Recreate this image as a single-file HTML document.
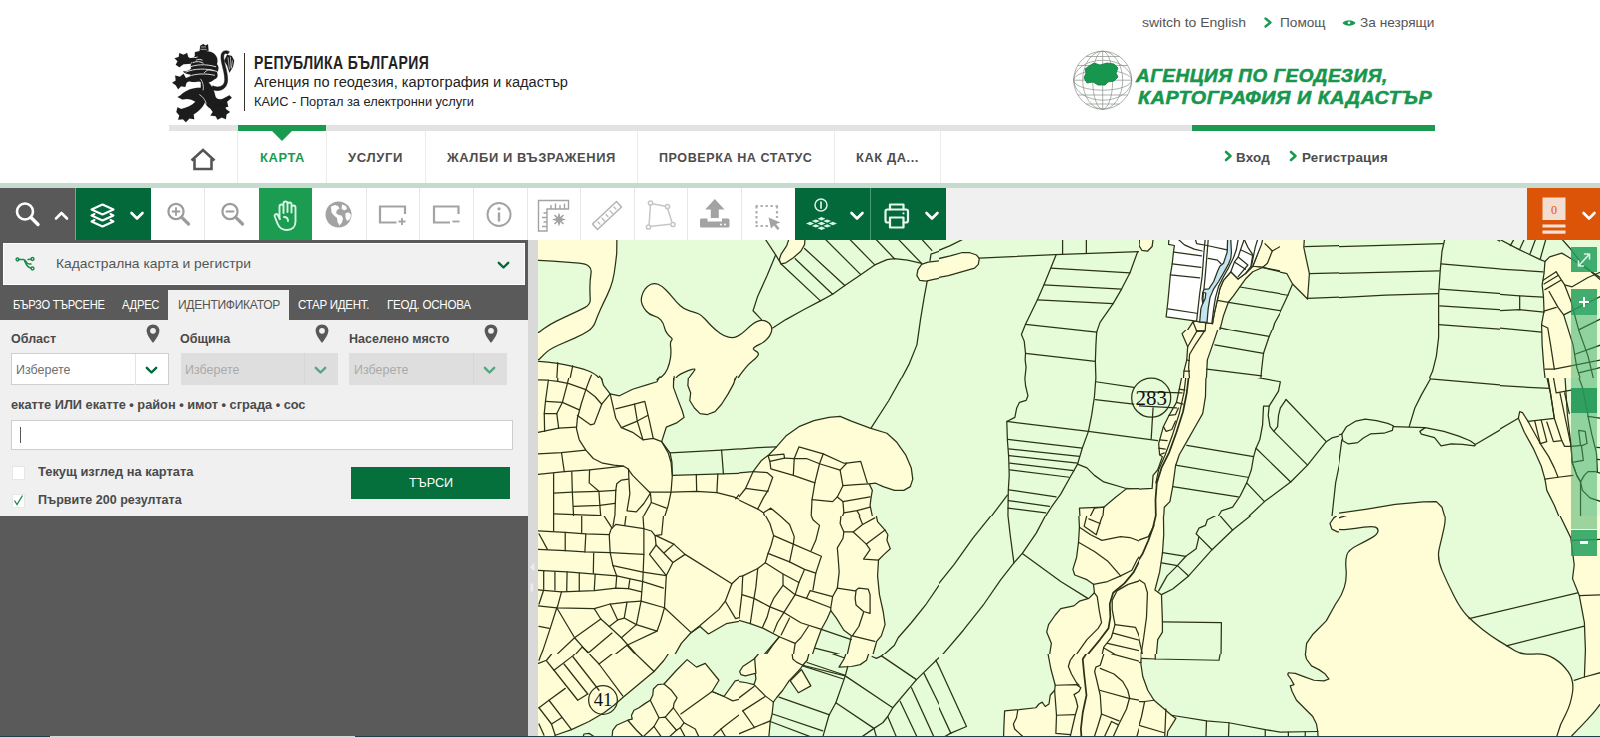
<!DOCTYPE html>
<html lang="bg">
<head>
<meta charset="utf-8">
<title>КАИС - Портал за електронни услуги</title>
<style>
*{box-sizing:border-box;margin:0;padding:0}
html,body{width:1600px;height:737px;overflow:hidden;background:#fff}
body{font-family:"Liberation Sans",sans-serif;color:#4a4a4a;position:relative}
.abs{position:absolute}
.t{position:absolute;white-space:nowrap;line-height:1;transform-origin:0 50%}
/* header */
#toplinks .t{font-size:13px;color:#555;top:16px}
#graybar{left:169px;top:125px;width:1266px;height:6px;background:#e3e3e3}
.gb{background:#1a9a50;height:6px;top:125px}
#nav{left:169px;top:131px;width:1266px;height:52px;background:#fff}
.nb{top:131px;width:1px;height:52px;background:#ececec}
.ni{font-weight:bold;font-size:13px;letter-spacing:.6px;color:#4d4d4d;top:151px}
#navstrip{left:0;top:183px;width:1600px;height:5px;background:#c6dacd}
/* toolbar */
#toolbar{left:0;top:188px;width:1600px;height:52px;background:#f0f0f0}
.tb{top:188px;height:52px}
.sep{top:188px;width:1px;height:52px;background:#e6e6e6}
/* panel */
#panel{left:0;top:240px;width:528px;height:497px;background:#5a5a5a}
#split{left:528px;top:240px;width:10px;height:497px;background:#d9d9d9}
#ddl{left:3px;top:243px;width:521.5px;height:42px;background:#f1f1f1;border:1px solid #fff}
.tab{font-size:12px;color:#fff;top:299px;letter-spacing:-.3px}
#tabact{left:168px;top:290px;width:121px;height:30px;background:#f0f0f0}
#form{left:0;top:320px;width:528px;height:196px;background:#f0f0f0}
.lbl{font-weight:bold;font-size:12.5px;color:#4a4a4a}
.sel{height:32px;top:353px;font-size:13px}
#map{left:538px;top:240px;width:1062px;height:497px;background:#e6fcd9;overflow:hidden}
</style>
</head>
<body>
<!-- top links -->
<div id="toplinks">
<span class="t" id="k1" style="left:1142.0px;transform:scaleX(1.0741)">switch to English</span>
<span class="t" id="k2" style="left:1280.4px;transform:scaleX(1.0498)">Помощ</span>
<span class="t" id="k3" style="left:1360.0px;transform:scaleX(1.0500)">За незрящи</span>
</div>

<!-- header left -->
<div class="abs" style="left:244px;top:53px;width:1px;height:58px;background:#333"></div>
<span class="t" id="h1" style="left:254.3px;top:55px;font-size:17.5px;font-weight:bold;color:#222;letter-spacing:.5px;transform:scaleX(0.8011)">РЕПУБЛИКА БЪЛГАРИЯ</span>
<span class="t" id="h2" style="left:254.0px;top:74px;font-size:15.5px;color:#222;transform:scaleX(0.9435)">Агенция по геодезия, картография и кадастър</span>
<span class="t" id="h3" style="left:254.0px;top:94.5px;font-size:13px;color:#222;transform:scaleX(0.9860)">КАИС - Портал за електронни услуги</span>

<!-- header right -->
<span class="t" id="a1" style="left:1136.0px;top:66.800px;-webkit-text-stroke:.55px #17964d;font-size:18px;font-weight:bold;font-style:italic;color:#17964d;letter-spacing:.5px;transform:scaleX(1.0517)">АГЕНЦИЯ ПО ГЕОДЕЗИЯ,</span>
<span class="t" id="a2" style="left:1137.5px;top:88.700px;-webkit-text-stroke:.55px #17964d;font-size:18px;font-weight:bold;font-style:italic;color:#17964d;letter-spacing:.5px;transform:scaleX(1.0956)">КАРТОГРАФИЯ И КАДАСТЪР</span>


<!-- top icons -->
<svg class="abs" style="left:1263px;top:17px" width="10" height="11" viewBox="0 0 10 11" fill="none" stroke="#1a9a50" stroke-width="2.300" stroke-linecap="round" stroke-linejoin="round"><path d="M2.500 1.500L7.500 5.500L2.500 9.500"/></svg>
<svg class="abs" style="left:1342px;top:19px" width="14" height="8" viewBox="0 0 14 8"><path d="M.5 4C3 .3 11 .3 13.500 4C11 7.700 3 7.700 .5 4Z" fill="#1a9a50"/><circle cx="7" cy="3.800" r="1.300" fill="#fff"/></svg>
<svg class="abs" style="z-index:3;left:1224px;top:150px" width="9" height="12" viewBox="0 0 9 12" fill="none" stroke="#1a9a50" stroke-width="2.600" stroke-linecap="round" stroke-linejoin="round"><path d="M2 2L6.500 6L2 10"/></svg>
<svg class="abs" style="z-index:3;left:1289px;top:150px" width="9" height="12" viewBox="0 0 9 12" fill="none" stroke="#1a9a50" stroke-width="2.600" stroke-linecap="round" stroke-linejoin="round"><path d="M2 2L6.500 6L2 10"/></svg>
<!-- home -->
<svg class="abs" style="z-index:3;left:189px;top:147px" width="28" height="25" viewBox="0 0 28 25" fill="none" stroke="#555" stroke-width="2.600" stroke-linejoin="miter"><path d="M5.500 12V22H22.500V12M2.500 13.500L14 3L25.500 13.500"/></svg>
<!-- lion -->
<svg class="abs" style="left:165px;top:38px" width="90" height="88" viewBox="0 0 754 737"><g fill="#1c1c1c" stroke="#1c1c1c" stroke-linejoin="round">
<path d="M290 110l5-45 25-15 20 12 20-10 5 55z"/>
<path d="M250 120c40-20 120-20 160 10c30 25 35 60 25 90c20 20 15 50 0 70c15 25 0 50-20 55c-30 30-80 40-130 20c-40 10-90 0-130-20c30-5 50-20 60-40c-25 0-50-10-65-25c30 0 55-10 70-25c-10-15-5-40 10-55c-15-5-30-20-30-35c20 5 40 0 50-15z"/>
<path d="M215 215l-60 5-35 25-30-20 15-30-25-25 35-10 5-35 35 15 30-15 10 35 35 30z"/>
<path d="M230 345l-50 30-10 35-35-5-25 25-20-35-30-20 30-20-5-40 40 10 30-25 20 35 60-10z"/>
<path d="M300 330c60 20 110 80 120 150c5 30 30 40 60 30l60-30 20 20-40 35 10 40-50 10c-40 30-100 20-130-20c-20-30-30-70-50-100z"/>
<path d="M320 420c-60-10-140 10-190 60l-25 15 40 20c40-10 80-5 110 20c-30 30-70 50-120 60l-30-15-10 40 25 30-10 35 40-5 25 25 30-30 40 5-5-40c50-30 90-70 100-120c30-20 20-80-20-100z"/>
<path d="M430 560l-50 30 20 30-20 30 45 5 15 30 35-20 35 15 5-40 30-20-35-25-5-35z"/>
<path d="M400 400c40 20 100 10 100-50c0-80-40-150-30-210c5-30 40-45 70-25l-15 20c-15-10-30-5-32 10c-8 50 32 120 32 205c0 90-90 110-140 75z" stroke-width="4"/>
<path d="M520 140l40 10 20 40-10 50-30 50-20-60-25-40z"/>
</g><g fill="none" stroke="#fff" stroke-width="7" stroke-linecap="round">
<path d="M225 155c15 10 30 12 45 5M262 185c15-8 35-8 50 0M235 205c30-12 60-10 85 5"/>
<path d="M190 250c60-30 150-35 235-10M175 285c70-30 170-35 260-5M200 320c60-22 140-25 215-8M330 290c20-25 50-30 75-15"/>
<path d="M300 345c20 30 25 60 20 90M345 545c-10-30-30-55-55-70" stroke-width="6"/>
<path d="M528 165l12 95M548 160l5 90M565 190l-8 60" stroke-width="5"/>
<path d="M300 95h45M305 75l35 0" stroke-width="5"/>
</g></svg>
<!-- globe logo -->
<svg class="abs" style="left:1070px;top:48px" width="66" height="64" viewBox="1070 48 66 64" fill="none" stroke="#8a8f8a" stroke-width=".7">
<circle cx="1102.700" cy="80.200" r="29"/>
<ellipse cx="1102.700" cy="80.200" rx="20" ry="29"/><ellipse cx="1102.700" cy="80.200" rx="10" ry="29"/><path d="M1102.700 51.200V109.200"/>
<ellipse cx="1102.700" cy="80.200" rx="29" ry="10"/><ellipse cx="1102.700" cy="80.200" rx="29" ry="20"/><path d="M1073.700 80.200H1131.700"/>
<path d="M1078 65.500H1127.500M1078 95H1127.500M1086 56.500H1119.500M1086 104H1119.500"/>
<path d="M1089 66l5-3 6 2 7-2 7 1 4 4-2 5 2 4-4 4-6 1-3 3-7 0-5-3-6 1-3-5 2-5-1-4z" fill="#17964d" stroke="#0e7a3c" stroke-width=".8"/>
</svg>

<!-- nav -->
<div class="abs" id="graybar"></div>
<div class="abs gb" style="left:238px;width:88px"></div>
<div class="abs gb" style="left:1192px;width:243px"></div>
<div class="abs" id="nav"></div>
<div class="abs nb" style="left:237px"></div>
<div class="abs nb" style="left:326px"></div>
<div class="abs nb" style="left:425px"></div>
<div class="abs nb" style="left:637px"></div>
<div class="abs nb" style="left:834px"></div>
<div class="abs nb" style="left:940px"></div>
<svg class="abs" style="left:272px;top:131px" width="20" height="10"><path d="M0 0H20L10 10Z" fill="#1a9a50"/></svg>
<span class="t ni" id="n1" style="left:259.5px;color:#1a9a50;transform:scaleX(0.9924)">КАРТА</span>
<span class="t ni" id="n2" style="left:348.0px;transform:scaleX(1.0057)">УСЛУГИ</span>
<span class="t ni" id="n3" style="left:447.0px;transform:scaleX(0.9937)">ЖАЛБИ И ВЪЗРАЖЕНИЯ</span>
<span class="t ni" id="n4" style="left:659.0px;transform:scaleX(0.9645)">ПРОВЕРКА НА СТАТУС</span>
<span class="t ni" id="n5" style="left:856.0px;transform:scaleX(0.9880)">КАК ДА...</span>
<span class="t ni" id="n6" style="left:1236.0px;letter-spacing:.2px;transform:scaleX(1.0318)">Вход</span>
<span class="t ni" id="n7" style="left:1302.0px;letter-spacing:.2px;transform:scaleX(1.0296)">Регистрация</span>
<div class="abs" id="navstrip"></div>

<!-- toolbar -->
<div class="abs" id="toolbar"></div>
<div class="abs tb" style="left:0;width:75px;background:#595959"></div>
<div class="abs tb" style="left:76px;width:75px;background:#04693a"></div>
<div class="abs tb" style="left:151px;width:644px;background:#fff"></div>
<div class="abs tb" style="left:259px;width:53px;background:#1b9c51"></div>
<div class="abs tb" style="left:795px;width:75px;background:#04693a"></div>
<div class="abs tb" style="left:871px;width:75px;background:#04693a"></div>
<div class="abs tb" style="left:1527px;width:73px;background:#db5408"></div>

<div class="abs sep" style="left:204.3px"></div><div class="abs sep" style="left:365.6px"></div><div class="abs sep" style="left:419.3px"></div><div class="abs sep" style="left:473.0px"></div><div class="abs sep" style="left:526.5px"></div><div class="abs sep" style="left:580.0px"></div><div class="abs sep" style="left:633.6px"></div><div class="abs sep" style="left:687.3px"></div><div class="abs sep" style="left:740.5px"></div>
<div class="abs" style="left:75px;top:188px;width:1px;height:52px;background:#8a9a90"></div>
<div class="abs" style="left:869.5px;top:188px;width:1.500px;height:52px;background:#4f9a76"></div>
<svg class="abs" style="left:0;top:188px" width="1600" height="52" viewBox="0 188 1600 52" fill="none" stroke-linecap="round" stroke-linejoin="round">
<!-- search -->
<g stroke="#fff" stroke-width="2.6"><circle cx="25" cy="211.5" r="8"/><path d="M31 217.5L38 224.5" stroke-width="3.4"/></g>
<path d="M56 218.5L61.5 213L67 218.5" stroke="#fff" stroke-width="2.6"/>
<!-- layers -->
<g stroke="#fff" stroke-width="2"><path d="M102.5 204.5L113.5 209.5L102.5 214.5L91.500 209.5Z"/><path d="M94.500 214L91.500 215.500L102.5 220.5L113.5 215.500L110.5 214"/><path d="M94.500 220L91.500 221.500L102.5 226.500L113.5 221.500L110.5 220"/></g>
<path d="M131.500 213L137 218.500L142.500 213" stroke="#fff" stroke-width="2.6"/>
<!-- zoom in -->
<g stroke="#9c9c9c" stroke-width="2.2"><circle cx="176" cy="211.500" r="7.600"/><path d="M181.800 217.300L188.500 224" stroke-width="3.200"/><path d="M172.500 211.500H179.500M176 208V215" stroke-width="1.800"/></g>
<!-- zoom out -->
<g stroke="#9c9c9c" stroke-width="2.2"><circle cx="230" cy="211.500" r="7.600"/><path d="M235.800 217.300L242.500 224" stroke-width="3.200"/><path d="M226.500 211.500H233.500" stroke-width="1.800"/></g>
<!-- hand -->
<g stroke="#d9f5e5" stroke-width="1.900"><path d="M279.500 219V206.500a2 2 0 0 1 4 0V213M283.500 206V203.500a2 2 0 0 1 4 0V212M287.500 204.500a2 2 0 0 1 4 0V212.500M291.500 207.500a2 2 0 0 1 4 0V221.500c0 5.500-3.500 8.500-8.500 8.500c-5 0-8-2.500-9.500-6.500l-2.800-7c-.8-2 1.800-3.300 3-1.500l2.300 4"/><path d="M284 217c2.500 0 4 1.500 4 4"/></g>
<!-- globe -->
<circle cx="338.500" cy="214.500" r="13" fill="#a3a3a3"/>
<path d="M331 206.500l4-1.500 3 1 1.500 2.500-2.500 1.500-1 3 2.500 2 3 .5 1.500 3-1 4-2.500 3-2-3.500-.5-4-3-2.500-2.500-3zM342 204.500l4 1.500 1 3-3 1.500-2.500-2zM345.500 213l3.500-.5 2 2.500-1 4-3 2-1.500-3.500z" fill="#fff" stroke="none"/>
<!-- rect plus -->
<g stroke="#a3a3a3" stroke-width="2.200" stroke-linecap="butt" stroke-linejoin="miter"><path d="M405 214V206.500H380V222.500H396.500"/><path d="M398.500 221.500H405.500M402 218V225" stroke-width="1.800"/></g>
<!-- rect minus -->
<g stroke="#a3a3a3" stroke-width="2.200" stroke-linecap="butt" stroke-linejoin="miter"><path d="M458.500 214V206.500H434V222.500H450"/><path d="M452.500 221.500H459.500" stroke-width="1.800"/></g>
<!-- info -->
<g stroke="#a3a3a3" stroke-width="2"><circle cx="499" cy="214.500" r="11.500"/><path d="M499 213.500V220.500" stroke-width="2.400"/><circle cx="499" cy="208.800" r=".8" stroke-width="1.600"/></g>
<!-- ruler corner -->
<g stroke="#a3a3a3" stroke-width="1.400" stroke-linecap="butt" stroke-linejoin="miter"><path d="M538.500 200.500H568.500V209H547V231H538.500Z"/><path d="M551 209V205M555.500 209V203.500M560 209V205M564.500 209V203.500M547 213H543.500M547 217.500H542M547 222H543.500M547 226.500H542"/><path d="M559 212.500l1.800 5.200 5.200 1.800-5.200 1.800-1.800 5.200-1.800-5.200-5.200-1.800 5.200-1.800z" fill="#a3a3a3" stroke="none"/><path d="M554.500 215l9 9M563.500 215l-9 9" stroke-width="1.600"/></g>
<!-- ruler diag -->
<g stroke="#b5b5b5" stroke-width="1.600"><path d="M592.500 224L616.500 201.500L621.500 207L597.500 229.500Z"/><path d="M598 222l2 2.200M602 218.200l2.600 2.800M606 214.500l2 2.200M610 210.800l2.600 2.800M614 207l2 2.200" stroke-width="1.200"/></g>
<!-- polygon -->
<g stroke="#c6c6c6" stroke-width="1.500"><path d="M650.500 203.500L667 206.500L672.500 224L649 226.500Z"/><circle cx="650.500" cy="203" r="2.100" fill="#fff"/><circle cx="667.500" cy="206.500" r="2.100" fill="#fff"/><circle cx="673" cy="224.500" r="2.100" fill="#fff"/><circle cx="648.500" cy="227" r="2.100" fill="#fff"/></g>
<!-- upload -->
<g fill="#a3a3a3" stroke="none"><path d="M714.800 199L724.500 209.500H718.800V218H710.800V209.500H705.200Z"/><path d="M701.500 218.500H707.500V221.500H722V218.500H728a1.500 1.500 0 0 1 1.500 1.500V226a1.500 1.500 0 0 1-1.500 1.500H701.500a1.500 1.500 0 0 1-1.500-1.500V220a1.500 1.500 0 0 1 1.500-1.500Z"/></g>
<circle cx="721" cy="224.500" r="1" fill="#fff"/><circle cx="725" cy="224.500" r="1" fill="#fff"/>
<!-- dotted select -->
<g stroke="#b0b0b0" stroke-width="2.200" stroke-linecap="butt" stroke-dasharray="2.400 2.600"><path d="M755.500 206H778M777 206V218M756.500 206V227M755.500 226H768"/></g>
<path d="M768.500 217.500L780.500 222.500L776 224L779.500 228.500L777.500 230L774 225.500L771 228.500Z" fill="#a3a3a3"/>
<!-- info layers -->
<g stroke="#d9f5e5" stroke-width="1.500"><circle cx="821" cy="205" r="6"/><path d="M821 202V208" stroke-width="1.700"/></g>
<g fill="#d9f5e5" stroke="none"><path d="M821.500 217l4 1.700-4 1.700-4-1.700zM815.800 219.400l4 1.700-4 1.700-4-1.700zM827.200 219.400l4 1.700-4 1.700-4-1.700zM810.200 221.800l4 1.700-4 1.700-4.200-1.700zM821.500 221.800l4 1.700-4 1.700-4-1.700zM832.800 221.800l4.200 1.700-4.200 1.700-4-1.700zM815.800 224.200l4 1.700-4 1.700-4-1.700zM827.200 224.200l4 1.700-4 1.700-4-1.700zM821.500 226.600l4 1.700-4 1.700-4-1.700z"/></g>
<path d="M851.500 213L857 218.500L862.500 213" stroke="#fff" stroke-width="2.600"/>
<!-- printer -->
<g stroke="#e8f8ee" stroke-width="2.200"><path d="M890 209.500V204.500H903.500V209.500"/><path d="M890 222.500H887.500a2 2 0 0 1-2-2V211.500a2 2 0 0 1 2-2H906a2 2 0 0 1 2 2V220.500a2 2 0 0 1-2 2H903.500"/><path d="M890 217.500H903.500V227.500H890Z"/><circle cx="903.500" cy="213.300" r=".5" stroke-width="1.200"/></g>
<path d="M926.500 213L932 218.500L937.500 213" stroke="#fff" stroke-width="2.600"/>
<!-- orange -->
<rect x="1542.500" y="197.500" width="23" height="22.500" fill="#f2ddd0" stroke="none"/>
<text x="1554" y="213.500" font-family="Liberation Serif,serif" font-size="12" fill="#d9560d" text-anchor="middle" stroke="none">0</text>
<rect x="1542.500" y="224.500" width="23" height="3" fill="#f7e3d8"/><rect x="1542.500" y="230.500" width="23" height="3.200" fill="#f7e3d8"/>
<path d="M1583.500 213L1589 218.500L1594.500 213" stroke="#fff" stroke-width="2.600"/>
</svg>

<!-- panel -->
<div class="abs" id="panel"></div>
<div class="abs" id="split"></div>
<div class="abs" id="ddl"></div>
<span class="t" id="d1" style="left:55.7px;top:257px;font-size:13.500px;color:#555;transform:scaleX(1.0244)">Кадастрална карта и регистри</span>
<div class="abs" id="tabact"></div>
<span class="t tab" id="t1" style="left:12.7px;transform:scaleX(0.9286)">БЪРЗО ТЪРСЕНЕ</span>
<span class="t tab" id="t2" style="left:122.3px;transform:scaleX(0.9366)">АДРЕС</span>
<span class="t tab" id="t3" style="left:177.5px;color:#555;transform:scaleX(1.0057)">ИДЕНТИФИКАТОР</span>
<span class="t tab" id="t4" style="left:297.5px;transform:scaleX(0.9622)">СТАР ИДЕНТ.</span>
<span class="t tab" id="t5" style="left:387.0px;transform:scaleX(0.9689)">ГЕОД. ОСНОВА</span>
<div class="abs" id="form"></div>


<!-- ddl icon -->
<svg class="abs" style="left:15px;top:256px" width="22" height="16" viewBox="0 0 22 16" fill="none" stroke="#1c8a4c" stroke-width="1.500" stroke-linecap="round"><path d="M3.500 3.500H8.500C11.500 3.500 11 8 14 8H16M9.500 4.500C11 8 12 11.500 16 12"/><circle cx="2.500" cy="3.500" r="1.400"/><circle cx="17.500" cy="3" r="1.400"/><circle cx="17.500" cy="12.500" r="1.400"/><path d="M13 3.500L16 3.200"/></svg>
<svg class="abs" style="left:497px;top:261px" width="13" height="9" viewBox="0 0 13 9" fill="none" stroke="#04693a" stroke-width="2.400" stroke-linecap="round" stroke-linejoin="round"><path d="M1.800 1.800L6.500 6.500L11.200 1.800"/></svg>

<span class="t lbl" id="l1" style="left:11px;top:333px">Област</span>
<span class="t lbl" id="l2" style="left:180px;top:333px">Община</span>
<span class="t lbl" id="l3" style="left:349px;top:333px">Населено място</span>
<svg class="abs pin" style="left:146px;top:323.500px" width="14" height="20" viewBox="0 0 14 20"><path d="M7 .5C3.300 .5 .6 3.300 .6 6.800C.6 11.500 7 19 7 19S13.400 11.500 13.400 6.800C13.400 3.300 10.700 .5 7 .5Z" fill="#585858"/><circle cx="7" cy="6.800" r="2.900" fill="#f0f0f0"/></svg>
<svg class="abs pin" style="left:314.500px;top:323.500px" width="14" height="20" viewBox="0 0 14 20"><path d="M7 .5C3.300 .5 .6 3.300 .6 6.800C.6 11.500 7 19 7 19S13.400 11.500 13.400 6.800C13.400 3.300 10.700 .5 7 .5Z" fill="#585858"/><circle cx="7" cy="6.800" r="2.900" fill="#f0f0f0"/></svg>
<svg class="abs pin" style="left:483.500px;top:323.500px" width="14" height="20" viewBox="0 0 14 20"><path d="M7 .5C3.300 .5 .6 3.300 .6 6.800C.6 11.500 7 19 7 19S13.400 11.500 13.400 6.800C13.400 3.300 10.700 .5 7 .5Z" fill="#585858"/><circle cx="7" cy="6.800" r="2.900" fill="#f0f0f0"/></svg>

<div class="abs sel" style="left:11px;width:157.500px;background:#fff;border:1px solid #cfcfcf"></div>
<div class="abs" style="left:135px;top:354px;width:1px;height:30.500px;background:#e4e4e4"></div>
<div class="abs sel" style="left:180.500px;width:157.500px;background:#dedede"></div>
<div class="abs" style="left:304px;top:353px;width:1px;height:32px;background:#d6d6d6"></div>
<div class="abs sel" style="left:349px;width:157.500px;background:#dedede"></div>
<div class="abs" style="left:473px;top:353px;width:1px;height:32px;background:#d6d6d6"></div>
<span class="t" id="s1" style="left:16.0px;top:363px;font-size:13px;color:#6f6f6f;transform:scaleX(0.9601)">Изберете</span>
<span class="t" id="s2" style="left:185.0px;top:363px;font-size:13px;color:#aaa;transform:scaleX(0.9601)">Изберете</span>
<span class="t" id="s3" style="left:354.0px;top:363px;font-size:13px;color:#aaa;transform:scaleX(0.9601)">Изберете</span>
<svg class="abs" style="left:145px;top:365.500px" width="13" height="9" viewBox="0 0 13 9" fill="none" stroke="#04693a" stroke-width="2.400" stroke-linecap="round" stroke-linejoin="round"><path d="M1.800 1.800L6.500 6.500L11.200 1.800"/></svg>
<svg class="abs" style="left:314px;top:365.500px" width="13" height="9" viewBox="0 0 13 9" fill="none" stroke="#55a583" stroke-width="2.400" stroke-linecap="round" stroke-linejoin="round"><path d="M1.800 1.800L6.500 6.500L11.200 1.800"/></svg>
<svg class="abs" style="left:483px;top:365.500px" width="13" height="9" viewBox="0 0 13 9" fill="none" stroke="#55a583" stroke-width="2.400" stroke-linecap="round" stroke-linejoin="round"><path d="M1.800 1.800L6.500 6.500L11.200 1.800"/></svg>

<span class="t lbl" id="l4" style="left:11.0px;top:399px;transform:scaleX(1.0212)">екатте ИЛИ екатте • район • имот • сграда • сос</span>
<div class="abs" style="left:11px;top:419.500px;width:501.500px;height:30px;background:#fff;border:1px solid #cdcdcd"></div>
<div class="abs" style="left:20px;top:427px;width:1px;height:16px;background:#555"></div>
<div class="abs" style="left:11.500px;top:465.500px;width:13px;height:14px;background:#fff;border:1px solid #e6e6e6"></div>
<div class="abs" style="left:11.500px;top:493.500px;width:13px;height:14px;background:#fff;border:1px solid #e6e6e6"></div>
<svg class="abs" style="left:12px;top:494px" width="13" height="13" viewBox="0 0 13 13" fill="none" stroke="#1c8a4c" stroke-width="1.300"><path d="M2.500 6.500L5 10.500L10.500 1.500"/></svg>
<span class="t lbl" id="l5" style="left:38.0px;top:465.500px;transform:scaleX(1.0303)">Текущ изглед на картата</span>
<span class="t lbl" id="l6" style="left:38.0px;top:493.500px;transform:scaleX(1.0025)">Първите 200 резултата</span>
<div class="abs" style="left:351px;top:467px;width:159px;height:31.500px;background:#06703c"></div>
<span class="t" id="b1" style="left:408.5px;top:476px;font-size:13.500px;color:#fff;transform:scaleX(0.9333)">ТЪРСИ</span>
<div class="abs" style="z-index:5;left:0;top:735.700px;width:1600px;height:1.300px;background:#23404a"></div>
<div class="abs" style="z-index:6;left:50px;top:735.700px;width:305px;height:1.300px;background:#d4d8da"></div>

<svg class="abs" style="left:528px;top:560px" width="10" height="34" viewBox="0 0 10 34"><path d="M6.500 2.500L2 7L6.500 11.500Z" fill="#ececec"/><rect x="2.500" y="23.500" width="2.600" height="8" fill="#ececec"/></svg>
<!-- map -->
<div class="abs" id="map">
<svg id="mapsvg" width="1062" height="497" viewBox="538 240 1062 497">
<defs>
<clipPath id="c0"><rect x="538" y="240" width="361" height="250"/></clipPath>
<clipPath id="c1"><rect x="1240" y="487" width="360" height="250"/></clipPath>
<clipPath id="c2"><rect x="739" y="240" width="200" height="138"/></clipPath>
<clipPath id="c3"><rect x="939" y="240" width="200" height="138"/></clipPath>
<clipPath id="c4"><rect x="1139" y="240" width="200" height="138"/></clipPath>
<clipPath id="c5"><rect x="1339" y="240" width="200" height="138"/></clipPath>
<clipPath id="c6"><rect x="1500" y="240" width="100" height="138"/></clipPath>
<clipPath id="c7"><rect x="538" y="378" width="201" height="138"/></clipPath>
<clipPath id="c8"><rect x="739" y="378" width="200" height="138"/></clipPath>
<clipPath id="c9"><rect x="939" y="378" width="200" height="138"/></clipPath>
<clipPath id="c10"><rect x="1139" y="378" width="200" height="138"/></clipPath>
<clipPath id="c11"><rect x="1339" y="378" width="200" height="138"/></clipPath>
<clipPath id="c12"><rect x="1500" y="378" width="100" height="138"/></clipPath>
<clipPath id="c13"><rect x="538" y="516" width="201" height="138"/></clipPath>
<clipPath id="c14"><rect x="739" y="516" width="200" height="138"/></clipPath>
<clipPath id="c15"><rect x="939" y="516" width="200" height="138"/></clipPath>
<clipPath id="c16"><rect x="1139" y="516" width="200" height="138"/></clipPath>
<clipPath id="c17"><rect x="538" y="654" width="201" height="83"/></clipPath>
<clipPath id="c18"><rect x="739" y="654" width="200" height="83"/></clipPath>
<clipPath id="c19"><rect x="939" y="654" width="200" height="83"/></clipPath>
<clipPath id="c20"><rect x="1139" y="654" width="200" height="83"/></clipPath>
<clipPath id="c21"><rect x="538" y="240" width="201" height="138"/></clipPath>
<clipPath id="c22"><rect x="1160" y="240" width="120" height="90"/></clipPath>
<clipPath id="c23"><rect x="0" y="0" width="1600" height="737"/></clipPath>
<clipPath id="c24"><rect x="0" y="0" width="1600" height="737"/></clipPath>
</defs>
<g clip-path="url(#c0)">
<rect x="538" y="240" width="361" height="250" fill="#e6fcd9"/>
<g transform="translate(539,240) scale(0.33930)" stroke="#2a3218" stroke-width="3.684" stroke-linejoin="round" stroke-linecap="round" fill="none">
<path d="M95.0 -40.0L230.0 -40.0L229.5 0.0L229.0 40.0L225.5 70.0Q222.0 100.0 217.0 120.0Q212.0 140.0 201.0 162.5Q190.0 185.0 181.0 205.0Q172.0 225.0 166.0 241.5Q160.0 258.0 145.0 268.0Q130.0 278.0 105.0 289.0Q80.0 300.0 55.0 311.0Q30.0 322.0 15.0 337.0L0.0 352.0L-20.0 356.0L-40.0 360.0L-40.0 160.0L-40.0 -40.0L95.0 -40.0Z" fill="#fffdd6"/>
<path d="M-20.0 60.0L0.0 60.0L40.0 62.5Q80.0 65.0 118.5 68.5Q157.0 72.0 153.5 96.0Q150.0 120.0 150.0 140.0Q150.0 160.0 151.0 175.0Q152.0 190.0 136.0 198.5Q120.0 207.0 95.0 218.5Q70.0 230.0 50.0 240.0Q30.0 250.0 15.0 261.0L0.0 272.0L-20.0 273.5L-40.0 275.0L-40.0 167.5L-40.0 60.0L-20.0 60.0Z" fill="#e6fcd9"/>
<path d="M-20.0 358.0L0.0 358.0L25.0 360.0Q50.0 362.0 75.0 367.0Q100.0 372.0 122.5 378.5Q145.0 385.0 155.5 390.5Q166.0 396.0 172.0 401.5Q178.0 407.0 186.5 421.0Q195.0 435.0 203.5 446.0Q212.0 457.0 226.0 457.5Q240.0 458.0 260.0 450.5Q280.0 443.0 300.0 434.0Q320.0 425.0 335.0 418.5Q350.0 412.0 361.0 403.5Q372.0 395.0 378.5 380.0Q385.0 365.0 387.5 347.5Q390.0 330.0 388.0 315.0Q386.0 300.0 390.5 296.0Q395.0 292.0 389.0 287.5Q383.0 283.0 377.5 275.5Q372.0 268.0 369.5 256.5Q367.0 245.0 359.5 236.0Q352.0 227.0 338.5 223.5Q325.0 220.0 316.5 210.0Q308.0 200.0 304.0 190.0Q300.0 180.0 302.5 167.5Q305.0 155.0 312.5 145.0Q320.0 135.0 330.0 130.5Q340.0 126.0 351.0 130.5Q362.0 135.0 373.5 146.5Q385.0 158.0 395.0 170.5Q405.0 183.0 416.5 194.0Q428.0 205.0 444.0 209.0Q460.0 213.0 470.0 217.5Q480.0 222.0 490.0 233.5Q500.0 245.0 510.0 255.0Q520.0 265.0 532.5 274.0Q545.0 283.0 558.5 286.5Q572.0 290.0 584.5 284.0Q597.0 278.0 608.5 266.5Q620.0 255.0 630.0 247.5Q640.0 240.0 650.0 237.5Q660.0 235.0 670.0 240.0Q680.0 245.0 684.0 253.5Q688.0 262.0 684.0 273.5Q680.0 285.0 670.0 294.0Q660.0 303.0 650.0 307.5Q640.0 312.0 634.0 317.0Q628.0 322.0 639.0 327.5Q650.0 333.0 645.0 340.5Q640.0 348.0 629.0 356.5Q618.0 365.0 608.0 377.5Q598.0 390.0 592.0 398.5Q586.0 407.0 582.0 417.5Q578.0 428.0 570.0 444.0Q562.0 460.0 551.0 475.0Q540.0 490.0 530.0 499.0Q520.0 508.0 509.0 512.0Q498.0 516.0 488.0 513.0Q478.0 510.0 471.5 502.5Q465.0 495.0 458.5 486.5Q452.0 478.0 447.5 469.0Q443.0 460.0 444.0 452.5Q445.0 445.0 440.0 435.0Q435.0 425.0 437.5 416.5Q440.0 408.0 447.5 399.0Q455.0 390.0 458.5 384.0Q462.0 378.0 451.0 381.5Q440.0 385.0 428.0 390.0Q416.0 395.0 409.0 400.5Q402.0 406.0 400.5 415.5Q399.0 425.0 399.5 447.5Q400.0 470.0 404.0 485.0Q408.0 500.0 416.5 507.5Q425.0 515.0 423.5 526.5Q422.0 538.0 411.0 545.0Q400.0 552.0 391.5 557.0Q383.0 562.0 377.5 572.0Q372.0 582.0 368.5 591.0Q365.0 600.0 368.5 607.5Q372.0 615.0 378.5 622.5Q385.0 630.0 386.5 645.0Q388.0 660.0 389.0 677.5Q390.0 695.0 465.0 691.5Q540.0 688.0 582.5 685.5Q625.0 683.0 642.5 666.5Q660.0 650.0 677.5 629.0Q695.0 608.0 707.5 598.0Q720.0 588.0 740.0 574.0Q760.0 560.0 790.0 546.0Q820.0 532.0 850.0 526.0Q880.0 520.0 905.0 525.0Q930.0 530.0 960.0 542.5Q990.0 555.0 1015.0 565.0L1040.0 575.0L1070.5 582.5L1101.0 590.0L1101.0 683.4L1101.0 776.8L530.5 776.8L-40.0 776.8L-40.0 567.4L-40.0 358.0L-20.0 358.0Z" fill="#fffdd6"/>
<polyline points="385,630 540,620 695,608"/>
<polyline points="540,620 543,688"/>
<polyline points="1061,420 1030,480 985,555"/>
</g></g>
<g clip-path="url(#c1)">
<rect x="1240" y="487" width="360" height="250" fill="#e6fcd9"/>
<g transform="translate(1240,487) scale(0.33930)" stroke="#2a3218" stroke-width="3.684" stroke-linejoin="round" stroke-linecap="round" fill="none">
<path d="M918.5 10.0L932.0 60.0L938.0 73.0Q944.0 86.0 959.5 118.0Q975.0 150.0 980.0 190.0Q985.0 230.0 982.5 250.0Q980.0 270.0 990.0 295.0Q1000.0 320.0 1007.5 360.0Q1015.0 400.0 1016.5 440.0Q1018.0 480.0 1016.5 520.0Q1015.0 560.0 1000.0 565.0Q985.0 570.0 980.0 605.0Q975.0 640.0 960.0 670.0L945.0 700.0L932.5 738.4L920.0 776.8L1010.5 776.8L1101.0 776.8L1101.0 368.4L1101.0 -40.0L1003.0 -40.0L905.0 -40.0L918.5 10.0Z" fill="#fffdd6" stroke="none"/>
<path d="M270.0 105.0Q275.0 95.0 297.5 88.5Q320.0 82.0 360.0 71.0Q400.0 60.0 450.0 54.0Q500.0 48.0 535.0 45.0Q570.0 42.0 582.5 48.5Q595.0 55.0 601.5 72.5Q608.0 90.0 601.5 120.0Q595.0 150.0 587.5 180.0Q580.0 210.0 595.0 245.0Q610.0 280.0 630.0 320.0Q650.0 360.0 670.0 380.0Q690.0 400.0 715.0 420.0Q740.0 440.0 765.0 455.0Q790.0 470.0 810.0 482.5Q830.0 495.0 865.0 492.5Q900.0 490.0 925.0 505.0Q950.0 520.0 967.5 545.0Q985.0 570.0 980.0 605.0Q975.0 640.0 960.0 670.0L945.0 700.0L932.5 738.4L920.0 776.8L575.0 776.8L230.0 776.8L222.5 738.4L215.0 700.0L195.0 675.0Q175.0 650.0 165.0 625.0Q155.0 600.0 152.5 590.0Q150.0 580.0 145.0 564.0Q140.0 548.0 157.5 551.5Q175.0 555.0 202.5 563.5Q230.0 572.0 246.0 570.0Q262.0 568.0 251.0 556.5Q240.0 545.0 222.5 527.5Q205.0 510.0 198.5 495.0Q192.0 480.0 196.0 460.0Q200.0 440.0 215.0 420.0Q230.0 400.0 250.0 380.0Q270.0 360.0 285.0 340.0Q300.0 320.0 307.5 295.0Q315.0 270.0 312.5 242.5Q310.0 215.0 315.0 200.0Q320.0 185.0 345.0 172.5Q370.0 160.0 387.5 150.0Q405.0 140.0 406.5 131.0Q408.0 122.0 399.0 118.5Q390.0 115.0 365.0 118.5Q340.0 122.0 315.0 125.0Q290.0 128.0 277.5 121.5Q265.0 115.0 270.0 105.0Z" fill="#fffdd6"/>
<path d="M1081.0 634.5L1061.0 641.0L1050.5 654.5Q1040.0 668.0 1025.0 684.0Q1010.0 700.0 994.0 716.5L978.0 733.0L974.0 754.9L970.0 776.8L1035.5 776.8L1101.0 776.8L1101.0 702.4L1101.0 628.0L1081.0 634.5Z" fill="#e6fcd9"/>
<polyline points="285,-5 265,115"/>
<polyline points="-5,105 70,45 130,-5"/>
<polyline points="20,-5 75,45"/>
<polyline points="905,-5 932,60 944,86 975,150 985,230 980,270 1000,320 1015,400 1018,480 1015,560 985,570"/>
<polyline points="675,388 995,312"/>
<polyline points="785,468 1015,410"/>
<polyline points="1000,320 1070,318"/>
<polyline points="979,157 1070,154"/>
<polyline points="1015,560 1070,545"/>
<polyline points="-5,700 75,715 230,722"/>
<polyline points="75,715 75,745"/>
<polyline points="140,720 140,745"/>
<polyline points="190,722 190,745"/>
</g></g>
<g clip-path="url(#c2)">
<g transform="translate(739,240) scale(0.18727)" stroke="#2a3218" stroke-width="6.675" stroke-linejoin="round" stroke-linecap="round" fill="none">
<polyline points="140,-5 195,78 225,128"/>
<polyline points="195,82 150,190 100,300 75,378 120,425"/>
<polyline points="180,470 250,425 340,375 435,325 500,290 565,243 650,185 725,133 790,105 830,100 900,108 975,125"/>
<polygon points="278,-40 255,30 225,75 215,105 225,128 250,122 290,95 330,60 350,25 355,-40" fill="#fffdd6"/>
<polyline points="225,128 435,325"/>
<polyline points="300,100 500,290"/>
<polyline points="350,45 565,243"/>
<polyline points="460,-5 650,185"/>
<polyline points="590,-5 725,133"/>
<polyline points="730,-5 830,100"/>
<polyline points="850,-5 975,125"/>
<polyline points="975,-5 1030,55"/>
<polyline points="1020,112 1025,75 1075,58"/>
<polygon points="1108,108 1010,118 975,130 955,160 950,190 965,215 1000,220 1040,210 1108,198" fill="#fffdd6"/>
<polyline points="1005,220 990,300 970,420 950,560 910,660 865,745"/>
</g></g>
<g clip-path="url(#c3)">
<rect x="939" y="240" width="200" height="138" fill="#e6fcd9"/>
<g transform="translate(939,240) scale(0.18727)" stroke="#2a3218" stroke-width="6.675" stroke-linejoin="round" stroke-linecap="round" fill="none">
<polygon points="-40,108 60,85 120,68 165,68 200,80 215,100 210,130 190,150 120,170 50,190 -40,207" fill="#fffdd6"/>
<polyline points="-5,57 60,30 130,-5"/>
<polyline points="215,97 620,78 1075,62"/>
<polyline points="660,-5 660,75"/>
<polyline points="787,-5 787,70"/>
<polyline points="625,80 597,150 560,240 525,320 462,450 440,505 455,540 462,605 460,640 465,680 458,745"/>
<polyline points="1060,65 1020,175 975,262 930,340 860,440 842,492 838,560 835,648 838,745"/>
<polyline points="597,150 1020,175"/>
<polyline points="560,240 975,262"/>
<polyline points="525,320 930,340"/>
<polyline points="462,450 842,492"/>
<polyline points="462,605 835,648"/>
</g></g>
<g clip-path="url(#c4)">
<rect x="1139" y="240" width="200" height="138" fill="#e6fcd9"/>
<g transform="translate(1139,240) scale(0.18727)" stroke="#2a3218" stroke-width="6.675" stroke-linejoin="round" stroke-linecap="round" fill="none">
<polygon points="5,-40 0,30 15,55 45,60 70,35 80,-40" fill="#fffdd6"/>
<polygon points="770,-40 700,30 655,60 620,150 540,205 500,168 460,202 430,262 412,330 395,445 355,470 350,485 310,485 290,440 230,500 260,570 255,640 240,700 235,776.92 358,776.92 365,640 400,540 440,420 480,330 520,275 560,220 610,170 660,150 790,180 820,235 900,315 910,180 880,40 885,-40" fill="#fffdd6"/>
<polygon points="288,438 357,444 352,487 308,487" fill="#fffdd6"/>
<polygon points="160,-40 190,30 178,110 168,185 155,300 143,412 300,435 395,445 410,330 430,260 460,200 500,165 540,200 618,150 652,60 700,30 760,-40" fill="#ffffff"/>
<polygon points="478,-40 470,80 430,140 400,210 375,260 350,270 340,330 325,437 375,443 385,340 400,270 430,215 465,150 495,90 498,-40" fill="#c5e4f3"/>
<polyline points="185,65 335,90"/>
<polyline points="178,130 330,150"/>
<polyline points="170,185 325,205"/>
<polyline points="150,370 305,392"/>
<polyline points="352,-5 338,120 322,300 305,435"/>
<polyline points="378,-5 362,120 350,265"/>
<polyline points="350,270 345,330 355,300 352,275"/>
<polyline points="520,-5 510,80 470,160 420,260 400,330 390,445"/>
<polyline points="545,-5 528,80 500,140 480,180"/>
<polyline points="528,80 600,120"/>
<polyline points="555,40 625,75"/>
<polyline points="500,140 545,190"/>
<polyline points="660,-5 640,60"/>
<polyline points="412,325 478,332"/>
<polyline points="290,440 310,485 350,485"/>
<polyline points="310,485 260,570"/>
<polyline points="350,485 300,560 270,610 265,680 270,745"/>
<polyline points="240,700 270,700"/>
<polyline points="255,640 268,645"/>
<polyline points="820,235 795,295 755,380 695,515 665,605 655,690 650,745"/>
<polyline points="545,255 795,295"/>
<polyline points="478,332 755,380"/>
<polyline points="440,470 695,515"/>
<polyline points="405,560 665,605"/>
<polyline points="362,690 655,725"/>
<polyline points="885,35 1075,30"/>
<polyline points="910,180 1075,175"/>
<polyline points="900,312 1075,305"/>
</g></g>
<g clip-path="url(#c5)">
<rect x="1339" y="240" width="200" height="138" fill="#e6fcd9"/>
<g transform="translate(1339,240) scale(0.18727)" stroke="#2a3218" stroke-width="6.675" stroke-linejoin="round" stroke-linecap="round" fill="none">
<polyline points="-5,35 555,20"/>
<polyline points="565,-5 550,60 540,170 532,290 532,450 532,520 520,620 500,700 480,745"/>
<polyline points="-5,178 535,165"/>
<polyline points="-5,308 250,295 530,287"/>
<polyline points="545,128 1075,172"/>
<polyline points="540,262 1075,302"/>
<polyline points="538,352 960,378 1075,392"/>
<polyline points="532,452 1075,492"/>
<polyline points="1075,295 968,298 965,372 1075,385"/>
<polyline points="840,-5 900,30 1000,75 1075,105"/>
<polyline points="935,-5 920,40"/>
<polyline points="985,-5 965,60"/>
<polyline points="1040,-5 1010,80"/>
</g></g>
<g clip-path="url(#c6)">
<rect x="1500" y="240" width="100" height="138" fill="#e6fcd9"/>
<g transform="translate(1500,240) scale(0.18727)" stroke="#2a3218" stroke-width="6.675" stroke-linejoin="round" stroke-linecap="round" fill="none">
<polygon points="240,115 265,90 330,70 380,100 574,225 574,776.92 245,776.92 235,690 225,560 222,450 235,380 232,300 225,240 235,180" fill="#fffdd6"/>
<polygon points="340,400 380,380 574,300 574,776.92 430,776.92 410,680 390,560" fill="#e6fcd9" stroke="none"/>
<polyline points="-5,-5 100,50 215,105 240,115"/>
<polyline points="75,-5 55,30"/>
<polyline points="130,-5 105,50"/>
<polyline points="190,-5 160,75"/>
<polyline points="245,-5 215,100"/>
<polyline points="-5,155 230,170"/>
<polyline points="-5,290 105,298 232,305"/>
<polyline points="-5,378 105,372 235,385"/>
<polyline points="105,298 105,372"/>
<polyline points="-5,470 222,492"/>
<polyline points="230,215 300,170"/>
<polyline points="235,235 310,190"/>
<polyline points="240,265 325,215"/>
<polyline points="300,170 345,240 385,250 470,200 540,170"/>
<polyline points="262,275 310,360 340,400 390,560 410,680 430,745"/>
<polyline points="235,380 300,360"/>
<polyline points="340,400 380,380 540,300"/>
<polyline points="225,455 255,470 270,560 290,690 540,640"/>
<polyline points="240,690 290,690"/>
<polyline points="400,610 540,560"/>
<polyline points="420,710 540,680"/>
<polyline points="330,-5 370,40 440,130 540,215"/>
<polyline points="345,240 380,330 420,480 470,620 500,745"/>
<polyline points="420,480 540,420"/>
</g></g>
<g clip-path="url(#c7)">
<rect x="538" y="378" width="201" height="138" fill="#e6fcd9"/>
<g transform="translate(539,378) scale(0.18727)" stroke="#2a3218" stroke-width="6.675" stroke-linejoin="round" stroke-linecap="round" fill="none">
<polygon points="-40,-40 1108,-40 1108,776.92 -40,776.92" fill="#fffdd6" stroke="none"/>
<polygon points="320,-40 345,40 380,85 430,95 500,60 580,35 630,20 660,-40" fill="#e6fcd9"/>
<polygon points="720,-40 718,50 740,110 765,175 775,210 735,240 680,262 655,340 700,400 710,450 712,520 980,512 1108,508 1108,-40" fill="#e6fcd9"/>
<polygon points="800,-40 795,40 810,80 805,120 830,160 860,190 900,195 940,180 975,140 1010,85 1040,30 1060,-40" fill="#fffdd6"/>
<polyline points="700,400 975,385 1075,378"/>
<polyline points="975,385 985,512"/>
<polyline points="840,515 842,605"/>
<polyline points="955,512 950,612"/>
<polyline points="590,610 705,610 842,605 950,612 1040,635 1075,650"/>
<polyline points="1075,615 1050,645"/>
<polyline points="205,215 200,270 215,330 250,385 290,430 340,455 400,465 450,470 475,485 500,520 540,560 590,610"/>
<polyline points="380,85 395,150 410,215 440,265 500,290 555,330 610,322 655,340 690,400 705,450 712,520 705,610 690,680 670,745"/>
<polyline points="-5,10 50,12 100,18 160,30 250,62 300,100 335,140 380,85"/>
<polyline points="160,-5 150,35 125,130 95,190 105,268"/>
<polyline points="275,-5 250,62 225,140 205,215"/>
<polyline points="50,12 35,120 28,190 30,285"/>
<polyline points="35,125 125,130 215,170"/>
<polyline points="28,190 95,190"/>
<polyline points="335,140 295,245 275,250 205,200"/>
<polyline points="-5,290 105,268 200,262"/>
<polyline points="100,-5 100,18"/>
<polyline points="-5,405 120,398 250,385"/>
<polyline points="120,398 135,500"/>
<polyline points="-5,515 135,500 270,490 450,470"/>
<polyline points="410,165 510,140 565,125 590,230 610,322"/>
<polyline points="510,140 525,230 555,330"/>
<polyline points="440,265 525,230 580,200"/>
<polyline points="78,510 78,745"/>
<polyline points="175,500 178,610 185,745"/>
<polyline points="78,615 178,610 320,605 410,600"/>
<polyline points="270,490 268,560 320,605 325,680 330,745"/>
<polyline points="185,685 325,680 405,670"/>
<polyline points="410,600 415,565 440,545 478,540"/>
<polyline points="478,485 480,540 485,620 470,710 520,715 560,670 595,615"/>
<polyline points="410,600 405,745"/>
<polyline points="595,615 600,665 680,695"/>
<polyline points="600,665 555,745"/>
<polyline points="80,725 330,735"/>
</g></g>
<g clip-path="url(#c8)">
<rect x="739" y="378" width="200" height="138" fill="#e6fcd9"/>
<g transform="translate(739,378) scale(0.18727)" stroke="#2a3218" stroke-width="6.675" stroke-linejoin="round" stroke-linecap="round" fill="none">
<polygon points="-40,510 75,500 120,440 160,410 200,368 250,310 320,260 400,228 480,210 540,205 600,230 700,268 790,295 840,340 890,410 920,480 928,540 915,580 880,600 830,600 770,580 730,562 695,565 712,600 705,640 700,680 720,776.92 -40,776.92" fill="#fffdd6"/>
<polyline points="-5,380 100,372 200,368"/>
<polyline points="870,-5 800,120 705,268"/>
<polyline points="155,415 240,407 243,428 165,445 155,415"/>
<polyline points="165,445 170,485 290,520 405,560"/>
<polyline points="243,428 295,430 360,430 430,458 540,492 575,455 650,445 685,560"/>
<polyline points="295,430 320,368 450,405 560,455 575,455"/>
<polyline points="295,430 290,520"/>
<polyline points="450,405 430,458 405,560 390,650 385,745"/>
<polyline points="540,492 555,575 525,635 500,660 390,650"/>
<polyline points="555,575 625,570 695,565"/>
<polyline points="525,635 555,660 700,635"/>
<polyline points="555,660 560,720 550,745"/>
<polyline points="560,720 630,708 700,690"/>
<polyline points="630,708 650,745"/>
<polyline points="75,500 150,505 180,530 155,600 130,640 100,700 -5,650"/>
<polyline points="75,500 35,590 -5,640"/>
<polyline points="35,590 155,605"/>
<polyline points="100,700 130,720 170,695 230,745"/>
<polyline points="130,720 140,745"/>
</g></g>
<g clip-path="url(#c9)">
<rect x="939" y="378" width="200" height="138" fill="#e6fcd9"/>
<g transform="translate(939,378) scale(0.18727)" stroke="#2a3218" stroke-width="6.675" stroke-linejoin="round" stroke-linecap="round" fill="none">
<polyline points="458,-5 462,40 475,95 465,120 430,130 415,160 405,210 362,232 365,330 372,420 375,520 370,600 368,745"/>
<polyline points="838,-5 830,100 815,200 798,285 765,375 740,460 700,530 650,620 600,690 565,745"/>
<polyline points="362,232 798,285 1075,322"/>
<polyline points="368,328 765,375"/>
<polyline points="372,378 750,418"/>
<polyline points="375,415 740,455"/>
<polyline points="378,455 720,495"/>
<polyline points="378,490 695,530"/>
<polyline points="372,597 625,635"/>
<polyline points="370,655 590,685"/>
<polyline points="368,695 570,720"/>
<polyline points="365,625 275,745"/>
<polyline points="838,20 1040,50"/>
<polyline points="835,115 1040,140"/>
<polyline points="740,460 790,480 830,520 880,555 1000,590 1075,595"/>
<polygon points="1108,590 1000,592 940,640 880,690 750,695 755,776.92 1108,776.92" fill="#fffdd6"/>
<polyline points="880,690 830,695 805,745"/>
<polyline points="880,690 875,745"/>
</g></g>
<g clip-path="url(#c10)">
<rect x="1139" y="378" width="200" height="138" fill="#e6fcd9"/>
<g transform="translate(1139,378) scale(0.18727)" stroke="#2a3218" stroke-width="6.675" stroke-linejoin="round" stroke-linecap="round" fill="none">
<polygon points="235,-40 215,60 200,130 160,200 130,260 105,350 110,410 125,420 100,490 75,520 70,590 -40,595 -40,776.92 130,776.92 135,690 165,660 180,580 195,470 215,410 255,340 300,260 340,190 355,100 358,-40" fill="#fffdd6"/>
<polyline points="265,-5 255,80 235,180 200,290 160,400 120,480 95,560 88,650 90,745" stroke-width="9.345"/>
<polyline points="250,-5 240,80 215,190 180,300 140,410 105,490 90,560"/>
<polyline points="215,60 245,65"/>
<polyline points="200,130 235,140"/>
<polyline points="160,200 195,195 210,160"/>
<polyline points="130,260 145,285 175,275 195,230"/>
<polyline points="110,330 150,335"/>
<polyline points="105,375 140,380"/>
<polyline points="110,410 135,400"/>
<polyline points="-5,72 230,80"/>
<polyline points="-5,148 200,160"/>
<polyline points="75,160 65,325"/>
<polyline points="-5,320 100,335"/>
<polyline points="620,-5 755,20 745,70 720,110 695,150 665,150 660,250 645,330 625,375 612,420 600,490 575,560 540,630 500,690 440,710 420,745"/>
<polyline points="255,360 612,420"/>
<polyline points="195,465 580,530"/>
<polyline points="180,580 530,635"/>
<polyline points="695,150 690,200 700,260 720,285 740,260 745,200 755,160 785,115"/>
<polyline points="785,115 1000,340"/>
<polyline points="720,285 900,465"/>
<polyline points="625,375 810,555"/>
<polyline points="575,560 670,660"/>
<polyline points="1075,308 1030,320 1000,340 900,465 810,555 670,660 580,745"/>
<polyline points="1075,440 1050,560 1030,745"/>
</g></g>
<g clip-path="url(#c11)">
<rect x="1339" y="378" width="200" height="138" fill="#e6fcd9"/>
<g transform="translate(1339,378) scale(0.18727)" stroke="#2a3218" stroke-width="6.675" stroke-linejoin="round" stroke-linecap="round" fill="none">
<polyline points="485,-5 488,5 1075,55"/>
<polyline points="488,5 440,90 405,160 375,260"/>
<polyline points="15,300 40,260 90,230 140,220 200,228 260,242 290,255 285,280 240,295 170,298 130,320 100,345 50,352 20,335 15,300"/>
<polyline points="290,260 375,262 460,265 560,285 640,310 700,335 728,355"/>
<polyline points="460,265 432,285 440,300 510,318 545,362 600,352 660,355 725,362 728,355"/>
<polyline points="728,355 950,225"/>
<polyline points="15,300 -5,305"/>
<polyline points="15,330 -5,480"/>
<polygon points="950,225 965,180 980,185 1108,350 1108,480 1000,300" fill="#fffdd6"/>
<polyline points="1000,235 1075,230"/>
<polyline points="1020,240 1075,345"/>
<polyline points="1045,235 1075,300"/>
<polygon points="-40,728 150,700 300,675 450,662 520,660 550,690 575,776.92 -40,776.92" fill="#fffdd6"/>
</g></g>
<g clip-path="url(#c12)">
<rect x="1500" y="378" width="100" height="138" fill="#e6fcd9"/>
<g transform="translate(1500,378) scale(0.18727)" stroke="#2a3218" stroke-width="6.675" stroke-linejoin="round" stroke-linecap="round" fill="none">
<polygon points="250,-40 270,85 290,215 150,232 120,185 105,180 98,215 130,290 180,380 220,470 240,540 250,600 290,680 330,776.92 430,776.92 430,555 410,520 385,450 380,365 360,200 345,-40" fill="#fffdd6"/>
<polyline points="-5,40 150,50 265,55"/>
<polyline points="-5,275 98,215"/>
<polyline points="250,-5 270,85 290,215 330,335 285,340 250,235"/>
<polyline points="285,-5 300,80 380,65"/>
<polyline points="320,80 345,200 380,365 345,365 330,335"/>
<polyline points="345,80 370,190"/>
<polyline points="150,232 215,350 250,340 220,225"/>
<polyline points="185,228 215,350"/>
<polyline points="215,350 260,420 290,480 310,530"/>
<polyline points="240,540 310,530 390,520"/>
<polyline points="380,365 440,360 465,350 455,285 420,280 430,360"/>
<polyline points="380,365 385,450 445,440 435,360"/>
<polyline points="385,450 410,520 430,555 450,520 470,500 510,500 540,510"/>
<polyline points="430,555 440,600 480,640 540,660"/>
<polyline points="470,205 490,300 515,400 520,500"/>
<polyline points="470,205 540,215"/>
<polyline points="515,370 540,372"/>
<polyline points="520,435 540,437"/>
<polyline points="420,-5 440,50 470,200"/>
</g></g>
<g clip-path="url(#c13)">
<rect x="538" y="516" width="201" height="138" fill="#e6fcd9"/>
<g transform="translate(539,516) scale(0.18727)" stroke="#2a3218" stroke-width="6.675" stroke-linejoin="round" stroke-linecap="round" fill="none">
<polygon points="-40,-40 1108,-40 1108,776.92 -40,776.92" fill="#fffdd6" stroke="none"/>
<polygon points="705,776.92 760,680 810,625 860,590 905,630 1000,575 1108,555 1108,776.92" fill="#e6fcd9"/>
<polyline points="78,-5 78,80"/>
<polyline points="228,-5 228,88"/>
<polyline points="-5,80 140,88 250,95 375,100 385,70 410,45 560,68"/>
<polyline points="345,-5 390,65"/>
<polyline points="405,-5 395,55"/>
<polyline points="465,-5 458,50"/>
<polyline points="555,-5 560,68 560,205 555,330 545,455 520,580"/>
<polyline points="665,-5 655,100 620,105 600,80 560,68"/>
<polyline points="620,105 625,155 590,205 680,318"/>
<polyline points="625,105 720,150 780,205 715,248 680,318"/>
<polyline points="625,155 715,248"/>
<polyline points="670,195 720,150"/>
<polyline points="780,205 1030,362 995,455 960,500 860,585 810,625"/>
<polyline points="1075,320 1030,362"/>
<polyline points="995,455 1050,548 1075,540"/>
<polyline points="680,318 670,490 810,620"/>
<polyline points="670,490 650,560 630,615 520,580"/>
<polyline points="545,455 670,490"/>
<polyline points="0,95 45,178"/>
<polyline points="-5,178 140,185 245,192 380,195 560,205"/>
<polyline points="140,88 140,185"/>
<polyline points="250,95 245,192"/>
<polyline points="375,100 380,195 395,265 415,320 410,385"/>
<polyline points="292,198 290,305"/>
<polyline points="-5,290 150,298 300,310 415,320"/>
<polyline points="395,265 555,300 680,318"/>
<polyline points="415,320 555,350 665,385"/>
<polyline points="485,340 478,388 548,405"/>
<polyline points="25,295 25,390"/>
<polyline points="85,298 85,395"/>
<polyline points="150,298 148,400"/>
<polyline points="215,305 215,400"/>
<polyline points="300,310 295,398"/>
<polyline points="-5,395 120,405 295,398 410,385 478,388"/>
<polyline points="120,405 100,480 95,490"/>
<polyline points="25,395 0,470"/>
<polyline points="-5,480 95,490 295,495 380,470 470,460 545,455"/>
<polyline points="95,490 60,600 20,720 10,745"/>
<polyline points="0,590 55,600"/>
<polyline points="95,490 190,650 260,730"/>
<polyline points="295,495 330,550 375,590 440,650 520,740"/>
<polyline points="380,470 420,555 375,590"/>
<polyline points="470,460 455,545 420,555"/>
<polyline points="455,545 520,580 440,650"/>
<polyline points="330,550 190,650 100,735"/>
<polyline points="390,625 265,730 230,700 190,745"/>
<polyline points="630,615 470,690 400,745"/>
<polyline points="470,690 520,745"/>
</g></g>
<g clip-path="url(#c14)">
<rect x="739" y="516" width="200" height="138" fill="#e6fcd9"/>
<g transform="translate(739,516) scale(0.18727)" stroke="#2a3218" stroke-width="6.675" stroke-linejoin="round" stroke-linecap="round" fill="none">
<polygon points="-40,-40 1108,-40 1108,776.92 -40,776.92" fill="#fffdd6" stroke="none"/>
<polygon points="725,-40 740,30 780,75 795,100 790,130 808,175 775,205 745,235 740,320 750,420 770,510 780,580 760,640 735,670 705,776.92 1108,776.92 1108,-40" fill="#e6fcd9"/>
<polygon points="-40,545 60,575 130,600 215,645 180,690 120,776.92 -40,776.92" fill="#e6fcd9"/>
<polygon points="490,505 520,545 560,610 600,640 595,665 570,776.92 380,776.92 405,700 440,605 470,550" fill="#e6fcd9"/>
<polyline points="140,-5 165,40 185,105 170,160 155,200 140,250 100,280 20,320 -5,325"/>
<polyline points="215,-5 270,45 295,110 290,150"/>
<polyline points="185,105 290,150 440,215 410,305 395,395"/>
<polyline points="385,-5 395,20 430,50 410,130 385,185"/>
<polyline points="155,200 270,245 350,285 410,305"/>
<polyline points="290,150 270,245"/>
<polyline points="140,250 235,310 320,355 350,285"/>
<polyline points="235,310 235,370 185,440 165,485"/>
<polyline points="320,355 300,420 240,515"/>
<polyline points="100,280 90,380 80,440 60,575"/>
<polyline points="20,320 15,420 0,545"/>
<polyline points="15,420 80,440 165,485 240,515 330,570 440,605"/>
<polyline points="235,370 300,420 360,440 490,490 490,505"/>
<polyline points="360,440 380,398 500,430 490,490"/>
<polyline points="165,485 150,540 125,595"/>
<polyline points="240,515 205,570 185,620"/>
<polyline points="270,545 225,635"/>
<polyline points="215,645 300,680 330,650 370,590"/>
<polyline points="300,680 290,745"/>
<polyline points="215,645 130,745"/>
<polyline points="545,-5 540,40 560,85 555,120 525,170 530,230 535,300 525,385 500,430"/>
<polyline points="560,85 610,85 660,45 640,-5"/>
<polyline points="660,45 725,10"/>
<polyline points="610,85 680,150 780,75"/>
<polyline points="680,150 700,180 665,230 745,235"/>
<polyline points="525,385 620,400 640,385 690,390 700,420 700,520 665,510 625,475 620,440 625,400"/>
<polyline points="665,515 640,590 605,640 725,670"/>
<polyline points="440,605 600,660"/>
<polyline points="405,705 500,730 560,745"/>
<polyline points="1075,360 1000,470 920,570 850,650 830,690 770,745"/>
</g></g>
<g clip-path="url(#c15)">
<rect x="939" y="516" width="200" height="138" fill="#e6fcd9"/>
<g transform="translate(939,516) scale(0.18727)" stroke="#2a3218" stroke-width="6.675" stroke-linejoin="round" stroke-linecap="round" fill="none">
<polygon points="745,-40 750,60 745,140 735,220 715,285 725,315 790,340 825,365 830,410 800,440 750,455 720,480 650,495 620,530 585,580 575,620 600,680 585,776.92 1108,776.92 1108,-40" fill="#fffdd6"/>
<polyline points="280,-5 180,120 80,260 -5,365"/>
<polyline points="570,-5 520,90 445,200 400,250 330,340 240,470 130,610 15,745"/>
<polyline points="368,-5 380,100 400,250"/>
<polyline points="445,200 650,350 795,440"/>
<polyline points="750,60 810,100 870,130 970,110 1020,115 1075,135"/>
<polyline points="790,-5 775,55 840,100 865,20 875,-5"/>
<polyline points="800,15 860,40"/>
<polyline points="745,140 830,190 900,240 970,320"/>
<polyline points="825,365 900,350 970,320 1030,290 1060,230 1075,210"/>
<polyline points="1075,230 1040,300 990,360 930,410 912,470 915,540 905,600 860,660 790,745" stroke-width="9.345"/>
<polyline points="1075,345 1010,365 950,400 925,450 925,500 940,580 920,650 880,700 870,745"/>
<polyline points="830,410 845,430 855,500 868,570 850,600 790,660 730,745"/>
<polyline points="940,580 1050,595 1065,630 1075,660"/>
<polyline points="930,625 1075,665"/>
<polyline points="900,680 1075,720"/>
<polyline points="880,705 950,745"/>
</g></g>
<g clip-path="url(#c16)">
<rect x="1139" y="516" width="200" height="138" fill="#e6fcd9"/>
<g transform="translate(1139,516) scale(0.18727)" stroke="#2a3218" stroke-width="6.675" stroke-linejoin="round" stroke-linecap="round" fill="none">
<polygon points="-40,-40 130,-40 132,100 125,200 110,300 85,395 120,420 125,560 125,620 100,660 90,776.92 -40,776.92" fill="#fffdd6"/>
<polygon points="1108,380 1050,470 1000,560 930,630 895,680 885,776.92 1108,776.92" fill="#fffdd6"/>
<polygon points="1108,-40 1040,10 1020,40 1030,70 1060,85 1108,80" fill="#fffdd6"/>
<polyline points="90,-5 75,60 50,130 20,200 -5,240" stroke-width="9.345"/>
<polyline points="-5,130 50,110 80,50"/>
<polyline points="0,340 30,360 45,410 40,540 25,650 10,745"/>
<polyline points="-5,640 20,745"/>
<polyline points="125,195 250,215"/>
<polyline points="120,250 205,265"/>
<polyline points="600,-5 500,75 390,180 265,320 180,390 120,420"/>
<polyline points="430,-5 500,75"/>
<polyline points="415,-5 365,20 355,50 320,65 305,95 320,110 305,175 250,215 205,265 150,320 105,400"/>
<polyline points="320,110 390,180"/>
<polyline points="205,265 265,320"/>
<polyline points="125,565 440,570 438,745"/>
</g></g>
<g clip-path="url(#c17)">
<rect x="538" y="654" width="201" height="83" fill="#e6fcd9"/>
<g transform="translate(539,654) scale(0.12500)" stroke="#2a3218" stroke-width="10.000" stroke-linejoin="round" stroke-linecap="round" fill="none">
<polygon points="-40,-40 1640,-40 1640,704 -40,704" fill="#fffdd6" stroke="none"/>
<polygon points="1060,-40 1000,50 920,140 800,240 680,340 600,410 520,470 400,540 260,605 130,650 100,704 580,704 590,610 620,570 710,530 745,520 740,490 760,450 800,430 850,395 890,370 910,330 915,280 950,245 1000,240 1100,130 1185,45 1260,105 1330,75 1440,210 1385,300 1480,340 1570,215 1640,200 1640,-40" fill="#e6fcd9"/>
<polygon points="360,640 400,635 440,660 340,704" fill="#e6fcd9"/>
<polyline points="1385,300 1480,340 1550,375 1610,360"/>
<polyline points="20,-5 0,50"/>
<polyline points="-5,75 60,50 105,-5"/>
<polyline points="60,55 120,130 310,370 390,320"/>
<polyline points="120,130 270,15 290,-5"/>
<polyline points="200,80 390,320"/>
<polyline points="270,20 480,290"/>
<polyline points="400,-5 480,80 670,335"/>
<polyline points="480,80 590,-5"/>
<polyline points="770,-5 920,140"/>
<polyline points="210,275 80,370 0,430"/>
<polyline points="80,370 260,605"/>
<polyline points="0,430 100,560 130,650"/>
<polyline points="100,560 180,510"/>
<polyline points="0,560 40,650"/>
<polyline points="745,520 710,530 780,610 830,660"/>
<polyline points="890,370 960,510 1010,505 1100,610 1130,590 1160,550 1075,430 1080,395 1105,350 1060,290 1000,240"/>
<polyline points="960,510 920,580 830,665"/>
<polyline points="920,580 980,665"/>
<polyline points="1010,505 1075,430"/>
<polyline points="1100,610 1040,665"/>
<polyline points="1130,590 1170,665"/>
<polyline points="1160,550 1250,600 1280,665"/>
<polyline points="1135,480 1385,300"/>
<polyline points="1610,480 1480,580 1400,650 1390,675"/>
<polyline points="1455,600 1500,675"/>
<circle cx="512" cy="368" r="115"/>
<text x="512" y="419" font-family="Liberation Serif,serif" font-size="150" text-anchor="middle" fill="#111" stroke="none">41</text>
</g></g>
<g clip-path="url(#c18)">
<rect x="739" y="654" width="200" height="83" fill="#e6fcd9"/>
<g transform="translate(739,654) scale(0.12500)" stroke="#2a3218" stroke-width="10.000" stroke-linejoin="round" stroke-linecap="round" fill="none">
<polygon points="-40,215 60,230 120,245 135,200 130,155 50,175 15,165 5,140 30,100 120,40 190,-40 570,-40 545,50 510,90 490,120 400,215 350,290 300,350 275,385 265,480 250,540 235,704 -40,704" fill="#fffdd6"/>
<polygon points="410,215 500,125 575,255 475,310" fill="#fffdd6"/>
<polygon points="870,-40 840,40 800,105 900,100 970,85 1020,50 1050,-40" fill="#fffdd6"/>
<polyline points="425,-5 430,40 460,65 510,90"/>
<polyline points="125,35 135,155"/>
<polyline points="120,245 210,335 275,385"/>
<polyline points="-5,355 120,260"/>
<polyline points="30,455 210,340"/>
<polyline points="30,455 125,590"/>
<polyline points="-5,640 250,535"/>
<polyline points="510,90 850,175 1230,430 1420,205 1610,20"/>
<polyline points="510,95 835,200"/>
<polyline points="545,68 850,170"/>
<polyline points="870,100 850,175 775,390 720,490 670,665"/>
<polyline points="320,345 725,487"/>
<polyline points="270,480 670,615"/>
<polyline points="250,540 580,665"/>
<polyline points="775,390 1080,595 1100,665"/>
<polyline points="1230,430 1190,500 1150,550 1080,595 980,665"/>
<polyline points="1140,15 1420,205"/>
<polyline points="1065,20 1100,35 1140,15 1160,-5"/>
<polyline points="740,-5 840,30"/>
<polyline points="1290,380 1430,675"/>
<polyline points="1380,270 1560,665"/>
<polyline points="1480,155 1610,420"/>
<polyline points="1190,500 1260,665"/>
<polyline points="1575,50 1610,120"/>
</g></g>
<g clip-path="url(#c19)">
<rect x="939" y="654" width="200" height="83" fill="#e6fcd9"/>
<g transform="translate(939,654) scale(0.12500)" stroke="#2a3218" stroke-width="10.000" stroke-linejoin="round" stroke-linecap="round" fill="none">
<polygon points="865,-40 895,120 930,250 925,290 890,330 880,400 850,420 825,385 800,400 775,430 640,445 525,455 520,560 515,704 1640,704 1640,-40" fill="#fffdd6"/>
<polyline points="-5,90 220,580 90,635 40,665"/>
<polyline points="-5,420 95,635"/>
<polyline points="630,450 620,510 595,560 605,600 670,660"/>
<polyline points="930,250 1100,245 1135,270 1120,300 1080,325 1095,360 1110,420 1090,490 1050,660"/>
<polyline points="925,290 940,490 935,635 1050,645"/>
<polyline points="940,490 1090,485"/>
<polyline points="1090,-5 1050,50 1035,100 1060,160 1100,230 1120,250"/>
<polyline points="1180,-5 1150,40 1160,150 1180,330 1150,470 1135,600 1140,670" stroke-width="14.000"/>
<polyline points="1320,-5 1290,90 1255,105 1245,140 1260,200 1290,330 1300,480 1270,580 1240,670"/>
<polyline points="1290,115 1400,160 1470,220 1510,290 1525,350 1500,440 1440,560 1390,670"/>
<polyline points="1285,290 1520,355 1610,370"/>
<polyline points="1300,480 1440,535"/>
<polyline points="1380,540 1430,565"/>
<polyline points="1380,540 1320,670"/>
<polyline points="1370,-5 1610,60"/>
<polyline points="1610,570 1580,670"/>
</g></g>
<g clip-path="url(#c20)">
<rect x="1139" y="654" width="200" height="83" fill="#e6fcd9"/>
<g transform="translate(1139,654) scale(0.12500)" stroke="#2a3218" stroke-width="10.000" stroke-linejoin="round" stroke-linecap="round" fill="none">
<polygon points="-40,-40 20,-40 15,80 30,180 70,290 120,370 190,430 260,490 295,515 230,620 220,704 -40,704" fill="#fffdd6"/>
<polygon points="1320,-40 1340,40 1380,95 1440,125 1490,160 1520,200 1480,215 1400,210 1330,185 1250,155 1195,150 1190,165 1215,200 1240,245 1210,255 1225,300 1260,370 1320,430 1390,500 1420,560 1430,620 1435,704 1640,704 1640,-40" fill="#fffdd6"/>
<polygon points="18,-40 130,-40 130,40 20,35" fill="#fffdd6" stroke="none"/>
<polyline points="20,35 130,40 640,50 650,-5"/>
<polyline points="130,-5 130,40"/>
<polyline points="-5,70 15,65"/>
<polyline points="260,490 540,535 720,550 1010,605 1130,625 1430,620"/>
<polyline points="540,535 535,675"/>
<polyline points="720,550 715,675"/>
<polyline points="1010,605 1010,675"/>
<polyline points="1195,625 1195,675"/>
<polyline points="1330,622 1330,675"/>
<polyline points="-5,380 45,380 120,370"/>
<polyline points="45,380 20,500 0,570"/>
<polyline points="0,570 200,630"/>
<polyline points="215,440 205,675"/>
</g></g>
<g clip-path="url(#c21)">
<g transform="translate(539,240) scale(0.18727)" stroke="#2a3218" stroke-width="6.675" stroke-linejoin="round" stroke-linecap="round" fill="none">
<polyline points="100,655 95,745"/>
<polyline points="180,672 165,745"/>
<polyline points="280,722 270,745"/>
</g></g>
<g clip-path="url(#c22)">
<rect x="1160" y="240" width="120" height="90" fill="#e6fcd9"/>
<g transform="translate(1160,240) scale(0.12208)" stroke="#2a3218" stroke-width="10.240" stroke-linejoin="round" stroke-linecap="round" fill="none">
<polygon points="850,-40 790,140 760,215 840,225 983,260 1023,260 1023,-40" fill="#fffdd6"/>
<polygon points="580,260 640,320 700,275 760,215 840,225 760,260 700,320 650,390 600,460 560,510 520,620 480,777.25 200,777.25 270,670 295,665 430,685 445,600 470,490 490,400 520,330" fill="#fffdd6"/>
<polygon points="75,-40 70,35 118,45 110,100 100,195 85,285 65,500 50,630 295,665 320,670 430,685 445,600 470,490 490,400 520,330 580,260 640,320 700,275 760,215 790,140 830,40 850,-40" fill="#ffffff"/>
<polygon points="555,-40 550,100 520,190 490,215 470,260 440,340 400,400 360,405 350,430 345,480 350,520 335,560 325,670 385,675 395,560 410,470 440,400 480,340 520,270 560,200 580,150 585,100 578,-40" fill="#c5e4f3"/>
<polygon points="355,430 375,435 370,480 350,520" fill="#ffffff"/>
<polyline points="115,100 340,130"/>
<polyline points="100,195 335,225"/>
<polyline points="85,285 325,310"/>
<polyline points="65,565 300,600"/>
<polyline points="370,-5 360,100 345,300 325,440 300,665"/>
<polyline points="395,-5 385,120 370,300 360,400"/>
<polyline points="150,-5 200,40 280,75 345,90"/>
<polyline points="290,-5 300,30 385,45 550,80"/>
<polyline points="395,150 470,165 500,195"/>
<polyline points="640,-5 625,80 600,150 560,230 520,300 480,380 455,470 440,560 425,680"/>
<polyline points="690,-5 660,80 640,140 610,180 580,260"/>
<polyline points="690,-5 720,60 760,120 745,215"/>
<polyline points="660,80 755,125"/>
<polyline points="640,140 720,205 640,300"/>
<polyline points="610,180 700,240"/>
<polyline points="800,-5 780,60 750,210 700,275"/>
<polyline points="860,30 920,90 880,190 840,225"/>
<polyline points="920,90 990,50"/>
<polyline points="470,495 560,510"/>
<polyline points="840,225 990,255"/>
<polyline points="655,385 990,440"/>
<polyline points="560,510 990,580"/>
<polyline points="990,590 940,680 920,745"/>
<polyline points="490,720 600,745"/>
<polyline points="270,670 300,745"/>
<polyline points="375,680 370,745"/>
</g></g>
<g clip-path="url(#c23)">
<g transform="translate(0,0) scale(1.00000)" stroke="#2a3218" stroke-width="1.250" stroke-linejoin="round" stroke-linecap="round" fill="none">
<circle cx="1151.2" cy="397.7" r="19.5"/>
<text x="1151.2" y="404.84" font-family="Liberation Serif,serif" font-size="21" text-anchor="middle" fill="#111" stroke="none">283</text>
</g></g>
<g clip-path="url(#c24)">
<g transform="translate(0,0) scale(1.00000)" stroke="#2a3218" stroke-width="1.250" stroke-linejoin="round" stroke-linecap="round" fill="none">
<polyline points="599.3,376.2 602.2,379.4"/>
<polyline points="657,379.6 660.2,376.8"/>
<polyline points="674.2,376.5 673.8,380"/>
<polyline points="734.8,380 736.8,376.3"/>
</g></g>
</svg>
</div>

<!-- map controls -->
<div class="abs" style="left:1571px;top:246.500px;width:25.500px;height:25.500px;background:rgba(36,160,94,.86)"></div>
<svg class="abs" style="left:1571px;top:246.500px" width="26" height="26" viewBox="0 0 26 26" fill="none" stroke="#d8f5e3" stroke-width="1.600" stroke-linecap="round" stroke-linejoin="round"><path d="M8 18.500L18 7.500M13.500 7H18.500V12M12.500 19H7.500V14"/></svg>
<div class="abs" style="left:1571px;top:288.500px;width:25.500px;height:26px;background:rgba(36,160,94,.86)"></div>
<div class="abs" style="left:1578.500px;top:300.500px;width:10.500px;height:2.600px;background:#fff"></div>
<div class="abs" style="left:1582.500px;top:296.500px;width:2.600px;height:10.500px;background:#fff"></div>
<div class="abs" style="left:1571px;top:314.500px;width:25.500px;height:214px;background:rgba(60,170,100,.5)"></div>
<div class="abs" style="left:1571px;top:388px;width:25.500px;height:25px;background:rgba(30,150,85,.85)"></div>
<div class="abs" style="left:1571px;top:530px;width:25.500px;height:26px;background:rgba(36,160,94,.86)"></div>
<div class="abs" style="left:1579.500px;top:541px;width:8.500px;height:2.600px;background:#fff"></div>
</body>
</html>
